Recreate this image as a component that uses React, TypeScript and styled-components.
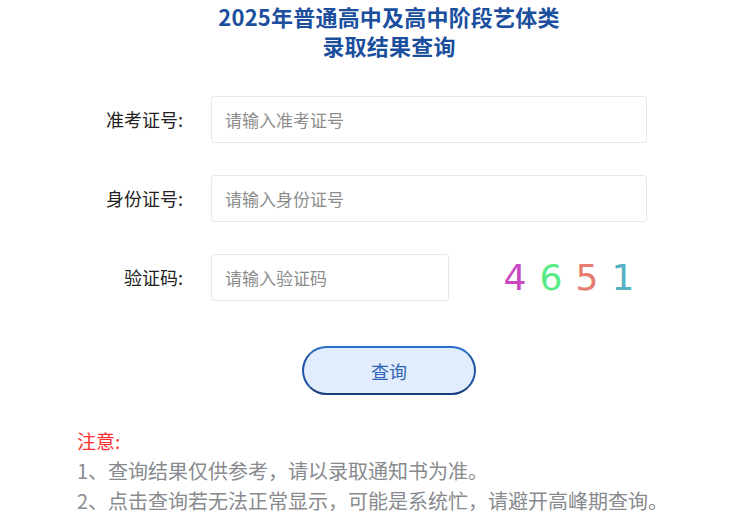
import { createGlobalStyle, styled } from "styled-components";

const GlobalStyle = createGlobalStyle`
  html, body {
    margin: 0;
    padding: 0;
    background: #ffffff;
    font-family: "Noto Sans CJK SC", "Noto Sans", sans-serif;
  }
`;

const Page = styled.div`
  width: 742px;
  padding-left: 36px;
  box-sizing: border-box;
`;

const Title = styled.h1`
  margin: 0;
  padding-top: 2px;
  text-align: center;
  font-size: 22px;
  line-height: 29px;
  font-weight: 700;
  letter-spacing: 0.2px;
  color: #1b4f9e;
`;

const Form = styled.div`
  display: flex;
  flex-direction: column;
  gap: 32px;
  margin-top: 36px;
`;

const Row = styled.div`
  display: flex;
  align-items: center;
`;

const Label = styled.label`
  width: 147px;
  margin-right: 28px;
  margin-top: -2px;
  text-align: right;
  font-size: 18px;
  color: #222;
`;

const Input = styled.input<{ $width: number }>`
  width: ${(p) => p.$width}px;
  height: 47px;
  box-sizing: border-box;
  padding: 0 13px;
  border: 1px solid #e8e8e8;
  border-radius: 3px;
  font-family: inherit;
  font-size: 17px;
  color: #333;
  outline: none;

  &::placeholder {
    color: #8c8c8c;
  }
`;

const Captcha = styled.div`
  display: flex;
  margin-left: 48px;
`;

const Digit = styled.span<{ $color: string }>`
  width: 36px;
  text-align: center;
  font-family: "DejaVu Sans", sans-serif;
  font-weight: 400;
  font-size: 36px;
  line-height: 47px;
  color: ${(p) => p.$color};
`;

const ButtonRow = styled.div`
  display: flex;
  justify-content: center;
  margin-top: 45px;
`;

const QueryButton = styled.button`
  width: 174px;
  height: 49px;
  border: 2px solid;
  border-color: #2e6fc6 #1f55a3 #163f7c #1f55a3;
  border-radius: 25px;
  background: #e1ecfc;
  font-family: inherit;
  font-size: 18px;
  color: #2f63b6;
  cursor: pointer;
`;

const Notes = styled.div`
  margin-top: 31px;
  padding-left: 41px;
  font-size: 20px;
  line-height: 30px;
  color: #888a8e;
`;

const NoteTitle = styled.div`
  font-size: 19px;
  color: #ff3030;
`;

const digits = [
  { d: "4", c: "#c947c0" },
  { d: "6", c: "#58ec86" },
  { d: "5", c: "#e57c6e" },
  { d: "1", c: "#56b3c4" },
];

export default function App() {
  return (
    <Page>
      <GlobalStyle />
      <Title>
        2025年普通高中及高中阶段艺体类
        <br />
        录取结果查询
      </Title>
      <Form>
        <Row>
          <Label>准考证号:</Label>
          <Input $width={436} placeholder="请输入准考证号" />
        </Row>
        <Row>
          <Label>身份证号:</Label>
          <Input $width={436} placeholder="请输入身份证号" />
        </Row>
        <Row>
          <Label>验证码:</Label>
          <Input $width={238} placeholder="请输入验证码" />
          <Captcha>
            {digits.map((x, i) => (
              <Digit key={i} $color={x.c}>
                {x.d}
              </Digit>
            ))}
          </Captcha>
        </Row>
      </Form>
      <ButtonRow>
        <QueryButton>查询</QueryButton>
      </ButtonRow>
      <Notes>
        <NoteTitle>注意:</NoteTitle>
        <div>1、查询结果仅供参考，请以录取通知书为准。</div>
        <div>2、点击查询若无法正常显示，可能是系统忙，请避开高峰期查询。</div>
      </Notes>
    </Page>
  );
}
